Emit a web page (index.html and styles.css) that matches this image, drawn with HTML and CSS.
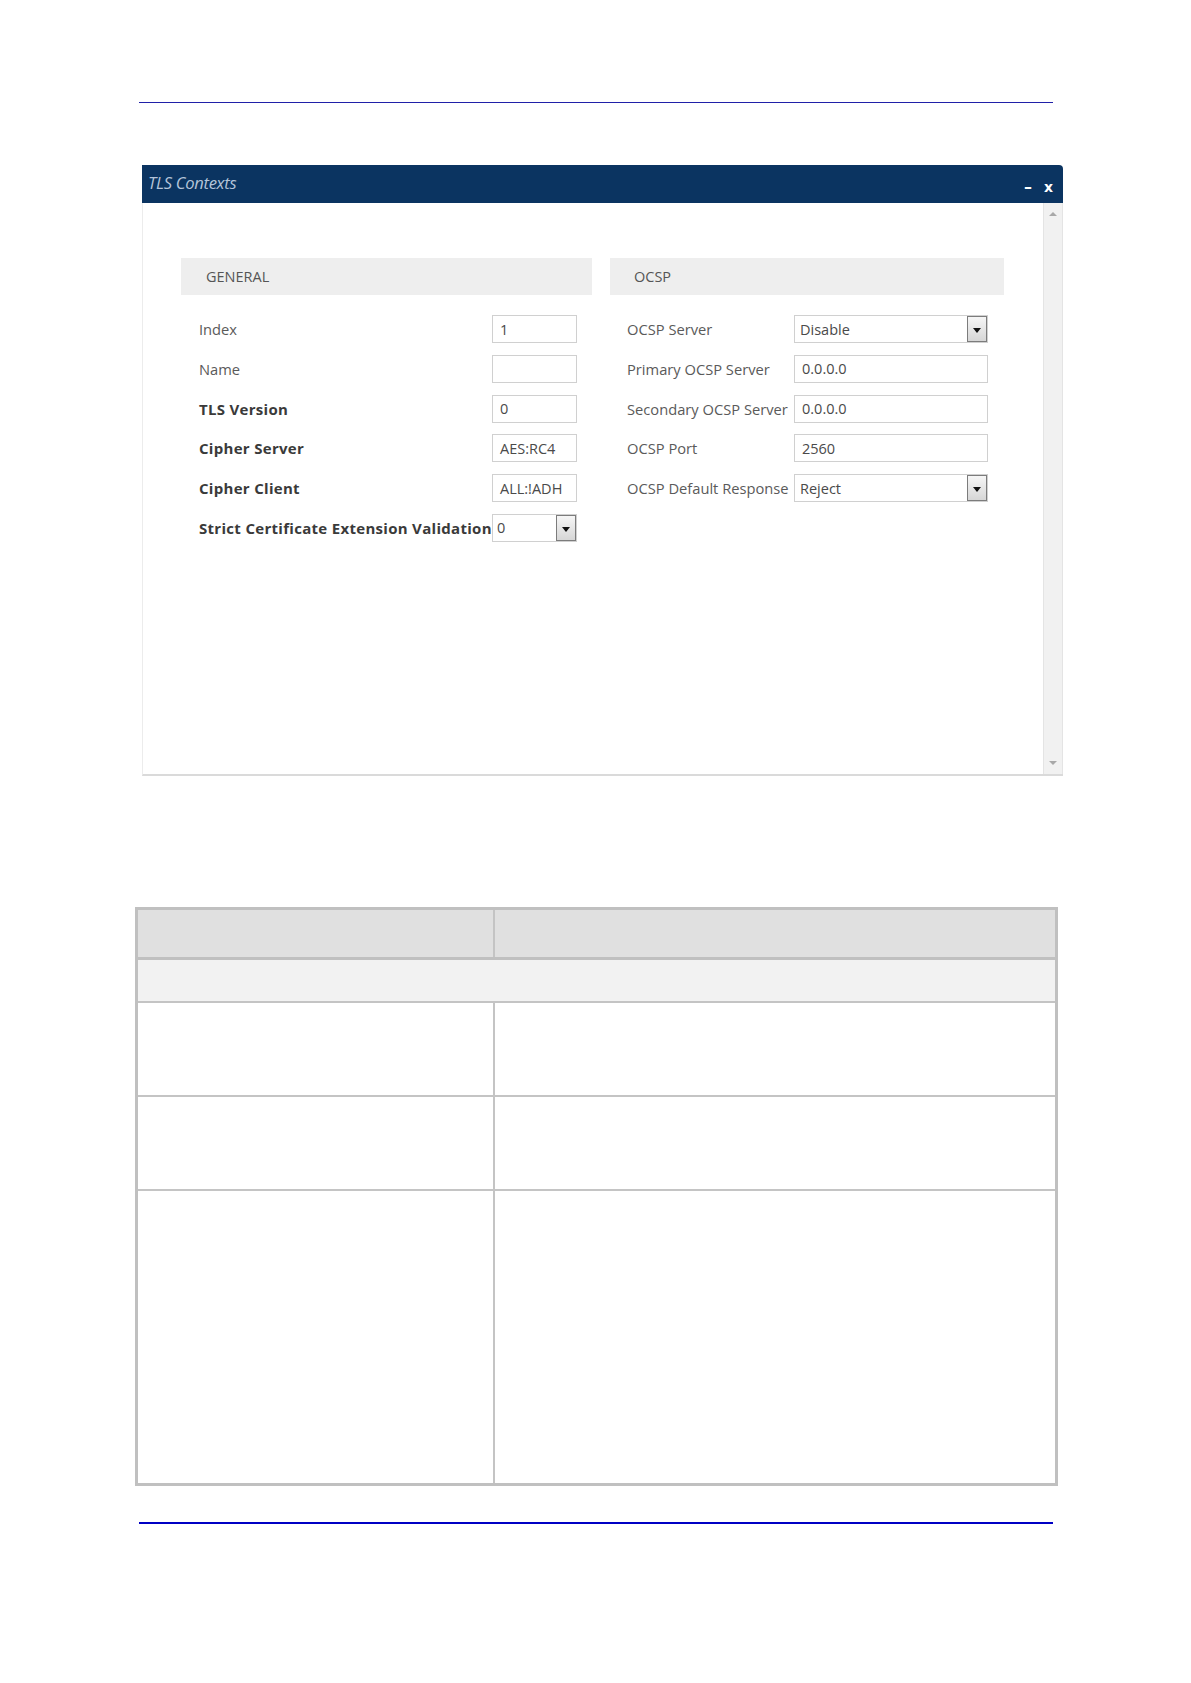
FILE: index.html
```html
<!DOCTYPE html>
<html>
<head>
<meta charset="utf-8">
<link rel="stylesheet" href="styles.css">
</head>
<body>
<div class="page">
  <div class="rule-top"></div>

  <div class="dialog">
    <div class="dlg-head">
      <span class="dlg-title">TLS Contexts</span>
      <span class="dlg-ctrls"><span class="ctl min">&ndash;</span><span class="ctl">x</span></span>
    </div>
    <div class="dlg-body">
      <div class="dlg-content">
        <div class="section general">
          <div class="sec-bar">GENERAL</div>
          <div class="rows">
            <div class="row"><span class="lbl">Index</span><span class="inp">1</span></div>
            <div class="row"><span class="lbl">Name</span><span class="inp"></span></div>
            <div class="row"><span class="lbl b">TLS Version</span><span class="inp">0</span></div>
            <div class="row"><span class="lbl b">Cipher Server</span><span class="inp">AES:RC4</span></div>
            <div class="row"><span class="lbl b">Cipher Client</span><span class="inp">ALL:!ADH</span></div>
            <div class="row"><span class="lbl b">Strict Certificate Extension Validation</span><span class="inp sel"><span class="val">0</span><span class="arrow"></span></span></div>
          </div>
        </div>
        <div class="section ocsp">
          <div class="sec-bar">OCSP</div>
          <div class="rows">
            <div class="row"><span class="lbl">OCSP Server</span><span class="inp sel"><span class="val">Disable</span><span class="arrow"></span></span></div>
            <div class="row"><span class="lbl">Primary OCSP Server</span><span class="inp">0.0.0.0</span></div>
            <div class="row"><span class="lbl">Secondary OCSP Server</span><span class="inp">0.0.0.0</span></div>
            <div class="row"><span class="lbl">OCSP Port</span><span class="inp">2560</span></div>
            <div class="row"><span class="lbl">OCSP Default Response</span><span class="inp sel"><span class="val">Reject</span><span class="arrow"></span></span></div>
          </div>
        </div>
      </div>
      <div class="scrollbar">
        <span class="sarrow up"></span>
        <span class="sarrow down"></span>
      </div>
    </div>
  </div>

  <table class="ptable">
    <tr class="th"><td class="c1"></td><td class="c2"></td></tr>
    <tr class="sub"><td colspan="2"></td></tr>
    <tr class="r3"><td class="c1"></td><td class="c2"></td></tr>
    <tr class="r4"><td class="c1"></td><td class="c2"></td></tr>
    <tr class="r5"><td class="c1"></td><td class="c2"></td></tr>
  </table>

  <div class="rule-bottom"></div>
</div>
</body>
</html>
```

FILE: styles.css
```css
* { box-sizing: border-box; }
html, body { margin: 0; padding: 0; background: #ffffff; }
body { font-family: "Open Sans", "DejaVu Sans", sans-serif; }

.page {
  width: 1191px;
  height: 1683px;
  padding-top: 102px;
}

.rule-top {
  margin-left: 139px;
  width: 914px;
  border-top: 1px solid #2020a8;
}

.dialog {
  margin-left: 142px;
  margin-top: 62px;
  width: 921px;
}

.dlg-head {
  height: 38px;
  background: #0b3461;
  border-radius: 0 4px 0 0;
  display: flex;
  align-items: center;
  justify-content: space-between;
  padding: 0 10px 0 6px;
}

.dlg-title {
  font-style: italic;
  font-size: 16.6px;
  color: #b4c4da;
  letter-spacing: -0.3px;
  margin-top: -4px;
}

.dlg-ctrls {
  display: flex;
  align-items: center;
  gap: 12px;
  margin-top: 6px;
}
.ctl {
  color: #ffffff;
  font-weight: 700;
  font-size: 14px;
  font-family: "DejaVu Sans", sans-serif;
}
.ctl.min {
  font-size: 16px;
  font-weight: 900;
  line-height: 1;
}

.dlg-body {
  height: 573px;
  display: flex;
  border-left: 1px solid #ececec;
  border-bottom: 2px solid #dadada;
}

.dlg-content {
  flex: 1;
  display: flex;
  gap: 18px;
  padding: 55px 0 0 38px;
}

.scrollbar {
  width: 20px;
  background: #f1f1f1;
  border-left: 1px solid #e4e4e4;
  border-right: 1px solid #e4e4e4;
  display: flex;
  flex-direction: column;
  justify-content: space-between;
  align-items: center;
  padding: 9px 0 9px;
}
.sarrow {
  width: 0; height: 0;
  border-left: 4px solid transparent;
  border-right: 4px solid transparent;
}
.sarrow.up { border-bottom: 4px solid #a8a8a8; }
.sarrow.down { border-top: 4px solid #a8a8a8; }

.section.general { width: 411px; }
.section.ocsp { width: 394px; }

.sec-bar {
  height: 37px;
  background: #eeeeee;
  color: #555555;
  font-size: 14.5px;
  display: flex;
  align-items: center;
}
.general .sec-bar { padding-left: 25px; }
.ocsp .sec-bar { padding-left: 24px; }

.rows {
  display: flex;
  flex-direction: column;
  gap: 11.75px;
  padding: 20px 15px 0 18px;
}
.ocsp .rows { padding-left: 17px; }

.row {
  display: grid;
  align-items: center;
  height: 28px;
}
.general .row { grid-template-columns: 1fr 85px; }
.ocsp .row { grid-template-columns: 167px 194px; }

.lbl {
  font-size: 14.7px;
  color: #5a5a5a;
  white-space: nowrap;
}
.lbl.b {
  font-weight: 700;
  font-size: 15px;
  letter-spacing: 0.3px;
  color: #3a3a3a;
}

.inp {
  height: 28px;
  border: 1px solid #d0d0d0;
  background: #ffffff;
  font-size: 14.5px;
  color: #4a4a4a;
  display: flex;
  align-items: center;
  padding-left: 7px;
  white-space: nowrap;
}
.inp.sel {
  padding-left: 0;
  justify-content: space-between;
}
.inp.sel .val { padding-left: 5px; }
.general .inp.sel .val { padding-left: 4px; }

.arrow {
  width: 20px;
  height: 26px;
  border: 1px solid #7c7c7c;
  background: linear-gradient(#f6f6f6, #d6d6d6);
  position: relative;
}
.arrow::after {
  content: "";
  position: absolute;
  left: 5px;
  top: 11px;
  border-left: 4px solid transparent;
  border-right: 4px solid transparent;
  border-top: 5px solid #111111;
}

.ptable {
  margin-left: 135px;
  margin-top: 131px;
  width: 923px;
  border-collapse: collapse;
  border: 3px solid #c0c0c0;
}
.ptable td {
  border: 2px solid #c4c4c4;
  padding: 0;
}
.ptable .c1 { width: 357px; }
.ptable tr.th td { height: 50px; background: #e0e0e0; border-bottom: 3px solid #c0c0c0; }
.ptable tr.sub td { height: 43px; background: #f2f2f2; }
.ptable tr.r3 td { height: 94px; }
.ptable tr.r4 td { height: 94px; }
.ptable tr.r5 td { height: 295px; }

.rule-bottom {
  margin-left: 139px;
  margin-top: 36px;
  width: 914px;
  border-top: 2px solid #0000c4;
}
```
